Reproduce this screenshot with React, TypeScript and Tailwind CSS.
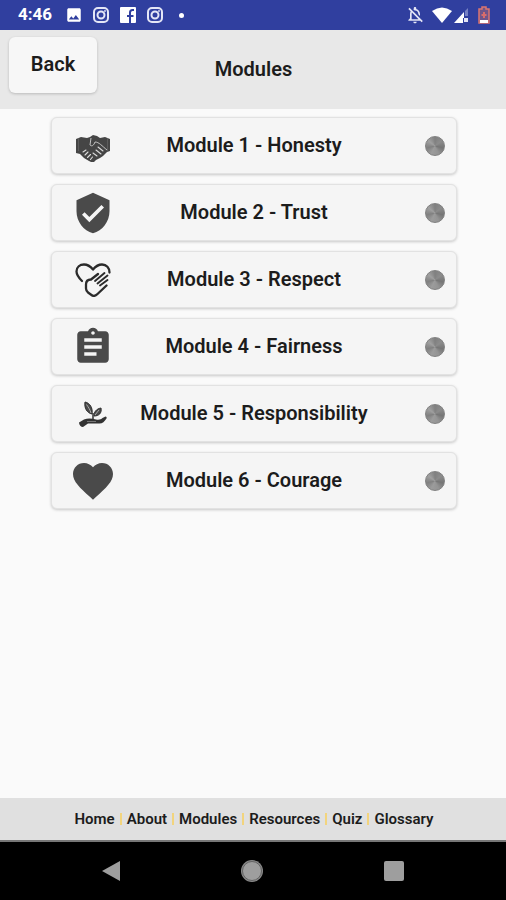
import type { ReactNode } from "react";
import { MdVerifiedUser, MdAssignment, MdFavorite, MdOutlineNotificationsOff, MdImage } from "react-icons/md";

function HandshakeIcon() {
  return (
    <svg viewBox="0 0 36 28" className="mt-1 w-9 h-7" aria-hidden="true">
      <path d="M1 5l5-2 6 1 3-1 3-2 4 1 3 2 5-1 5 2v12l-3 1-2 2-2 2-3 2-4 2-3 3-4-2-5-3-4-4-4-1z" fill="#454545" />
      <path d="M16 4l-1 7c2 2 4 0 5-3 4 0 7 4 12 8" fill="none" stroke="#c4c4c4" strokeWidth="1" />
      <path d="M3.500 4v13M32.500 4v13" stroke="#5c5c5c" strokeWidth="1" />
      <path d="M23 13l5 4M21 16l5 4M18 19l4 3M8 18l3-2M10 21l3-3M12.500 23.500l3-3M15.500 25.500l2-2.500" stroke="#dcdcdc" strokeWidth="1.100" strokeLinecap="round" />
    </svg>
  );
}

function CaringHeartIcon() {
  return (
    <svg viewBox="0 0 36 34" className="w-9 h-[34px]" fill="none" stroke="#2b2b2b" strokeWidth="2.300" strokeLinecap="round" strokeLinejoin="round" aria-hidden="true">
      <path d="M7 18C3 14 1.500 12 1.500 8.500C1.500 4 5 1.500 9 1.500c4 0 6.500 2 9 5 2.500-3 5-5 9-5 4.500 0 7.500 3.500 7.500 8" />
      <path d="M23 11l-7 5.500c-3 0-5 2-5 5v4c0 1.500.5 2.500 2 4l3.500 2.500c2 1.500 4 1 6-1l9-8.500" />
      <path d="M20 18L29.500 10M22.500 20.500L32.500 12.500M25 22.500L32.500 17" strokeWidth="1.900" />
    </svg>
  );
}

function GrowingPlantIcon() {
  return (
    <svg viewBox="0 0 30 28" className="w-[30px] h-7" aria-hidden="true">
      <path d="M7 2c5 1 8 6 7 12-5-1-8-6-7-12z" fill="#4a4a4a" stroke="#2d2d2d" />
      <path d="M23 8c1 5-2 8-7 8 0-4 2-7 7-8z" fill="#4a4a4a" stroke="#2d2d2d" />
      <path d="M8.500 4.500c2 3 3.500 5 4.500 8.500M21 10l-4 5" stroke="#aaa" fill="none" />
      <path d="M15 13v6" stroke="#333" strokeWidth="1.500" />
      <path d="M1 22.500l5-3c4-1.500 8-1 12 0 3 .5 5 0 6.500-1.500l3-1.500c1 0 1.500 1 1 2-2 3-4 5-7 5H10l-5 3.500c-2 0-4-2-4-4.500z" fill="#333" />
      <path d="M9 21.500h9" stroke="#777" />
    </svg>
  );
}

function InstagramIcon() {
  return (
    <svg viewBox="0 0 18 18" className="size-[18px]" fill="none" stroke="#e4e6f6" strokeWidth="2" aria-hidden="true">
      <rect x="2" y="2" width="14" height="14" rx="4" />
      <circle cx="9" cy="9" r="3.500" />
      <circle cx="13" cy="5" r=".6" strokeWidth="1" />
    </svg>
  );
}

const modules: { name: string; icon: ReactNode }[] = [
  { name: "Module 1 - Honesty", icon: <HandshakeIcon /> },
  { name: "Module 2 - Trust", icon: <MdVerifiedUser size={44} /> },
  { name: "Module 3 - Respect", icon: <CaringHeartIcon /> },
  { name: "Module 4 - Fairness", icon: <MdAssignment size={42} /> },
  { name: "Module 5 - Responsibility", icon: <GrowingPlantIcon /> },
  { name: "Module 6 - Courage", icon: <MdFavorite size={48} /> },
];

const footerLinks = ["Home", "About", "Modules", "Resources", "Quiz", "Glossary"];

function StatusBar() {
  return (
    <div className="flex h-[30px] items-center justify-between bg-[#303f9f] pl-[18px] pr-4 text-white">
      <div className="flex items-center">
        <span className="w-[47px] text-[17px] font-bold">4:46</span>
        <div className="flex items-center gap-[9px]">
          <MdImage size={18} />
          <InstagramIcon />
          <svg viewBox="0 0 18 18" className="size-[18px]" aria-hidden="true">
            <rect x="1" y="1" width="16" height="16" rx="1" fill="#fff" />
            <path d="M15 4h-1.500Q11 4 11 6.500V17M8 10h6.500" fill="none" stroke="#303f9f" strokeWidth="2" />
          </svg>
          <InstagramIcon />
          <span className="ml-1.5 size-[5px] rounded-full bg-white" />
        </div>
      </div>
      <div className="flex items-center">
        <MdOutlineNotificationsOff size={20} className="mr-[7px] text-[#e4e6f6]" />
        <svg viewBox="0 0 20 16" className="mr-0.5 h-4 w-5" aria-hidden="true">
          <path d="M0 4Q10-3 20 4L10 16z" fill="#fff" />
        </svg>
        <svg viewBox="0 0 16 16" className="mr-2 size-4" aria-hidden="true">
          <path d="M0 16L10 5v6h-1v5z" fill="#fff" />
          <path d="M11 4l3-3v8h-3z" fill="#7681c4" />
          <path d="M10 11h4v4h-4z" fill="#e4e6f6" />
        </svg>
        <svg viewBox="0 0 12 18" className="h-[18px] w-3" aria-hidden="true">
          <path d="M4 1h4v2h3v14H1V3h3z" fill="#70548a" stroke="#dc7570" strokeWidth="1.500" />
          <path d="M6 6v6M3.500 9h5" stroke="#d86c6c" strokeWidth="2" />
          <path d="M2 14h8v3H2z" fill="#fff" />
        </svg>
      </div>
    </div>
  );
}

export default function App() {
  return (
    <div className="flex min-h-screen flex-col bg-[#fafafa] font-[Roboto,sans-serif] text-[#1c1c1c]">
      <StatusBar />
      <header className="grid h-[79px] grid-cols-[1fr_auto_1fr] items-center bg-[#e8e8e8] pl-[9px] pr-2">
        <button type="button" className="mt-[7px] h-14 w-[88px] self-start rounded-md bg-[#f7f7f7] pb-0.5 text-xl font-semibold shadow-[0_1px_3px_rgba(0,0,0,0.2)]">
          Back
        </button>
        <h1 className="pb-0.5 text-xl font-semibold">Modules</h1>
      </header>
      <main className="flex flex-1 flex-col gap-2.5 py-2 pl-[51px] pr-[49px]">
        {modules.map((m) => (
          <button
            key={m.name}
            type="button"
            className="grid h-[57px] grid-cols-[82px_1fr_82px] items-center rounded-md border border-[#e2e2e2] bg-[#f5f5f5] shadow-[0_1px_3px_rgba(0,0,0,0.2)]"
          >
            <span className="flex justify-center text-[#4a4a4a]">{m.icon}</span>
            <span className="whitespace-nowrap pb-0.5 text-xl font-semibold">{m.name}</span>
            <span className="mr-[11px] size-5 justify-self-end rounded-full border border-[#808080] bg-[conic-gradient(#808080,#8c8c8c,#757575,#949494,#9c9c9c,#808080,#a0a0a0,#808080)]" />
          </button>
        ))}
      </main>
      <footer>
        <nav className="flex h-11 items-center justify-center border-b-2 border-[#777] bg-[#e0e0e0] pl-0.5 text-[15px] font-semibold">
          {footerLinks.map((label, i) => (
            <span key={label} className="flex items-center">
              {i > 0 && <span className="mx-[5px] h-3 w-0.5 bg-[#f2d47d]" />}
              <a href="#">{label}</a>
            </span>
          ))}
        </nav>
        <div className="flex h-[58px] items-center justify-center gap-[120px] bg-black">
          <button type="button" aria-label="Back">
            <svg viewBox="0 0 18 20" className="h-5 w-[18px]"><path d="M18 0v20L0 10z" fill="#9e9e9e" /></svg>
          </button>
          <button type="button" aria-label="Home">
            <svg viewBox="0 0 24 24" className="size-6">
              <circle cx="12" cy="12" r="11" fill="#8a8a8a" />
              <circle cx="12" cy="12" r="9.500" fill="#9e9e9e" stroke="#555" strokeWidth=".8" />
            </svg>
          </button>
          <button type="button" aria-label="Recent apps" className="size-5 rounded-xs bg-[#9e9e9e]" />
        </div>
      </footer>
    </div>
  );
}
